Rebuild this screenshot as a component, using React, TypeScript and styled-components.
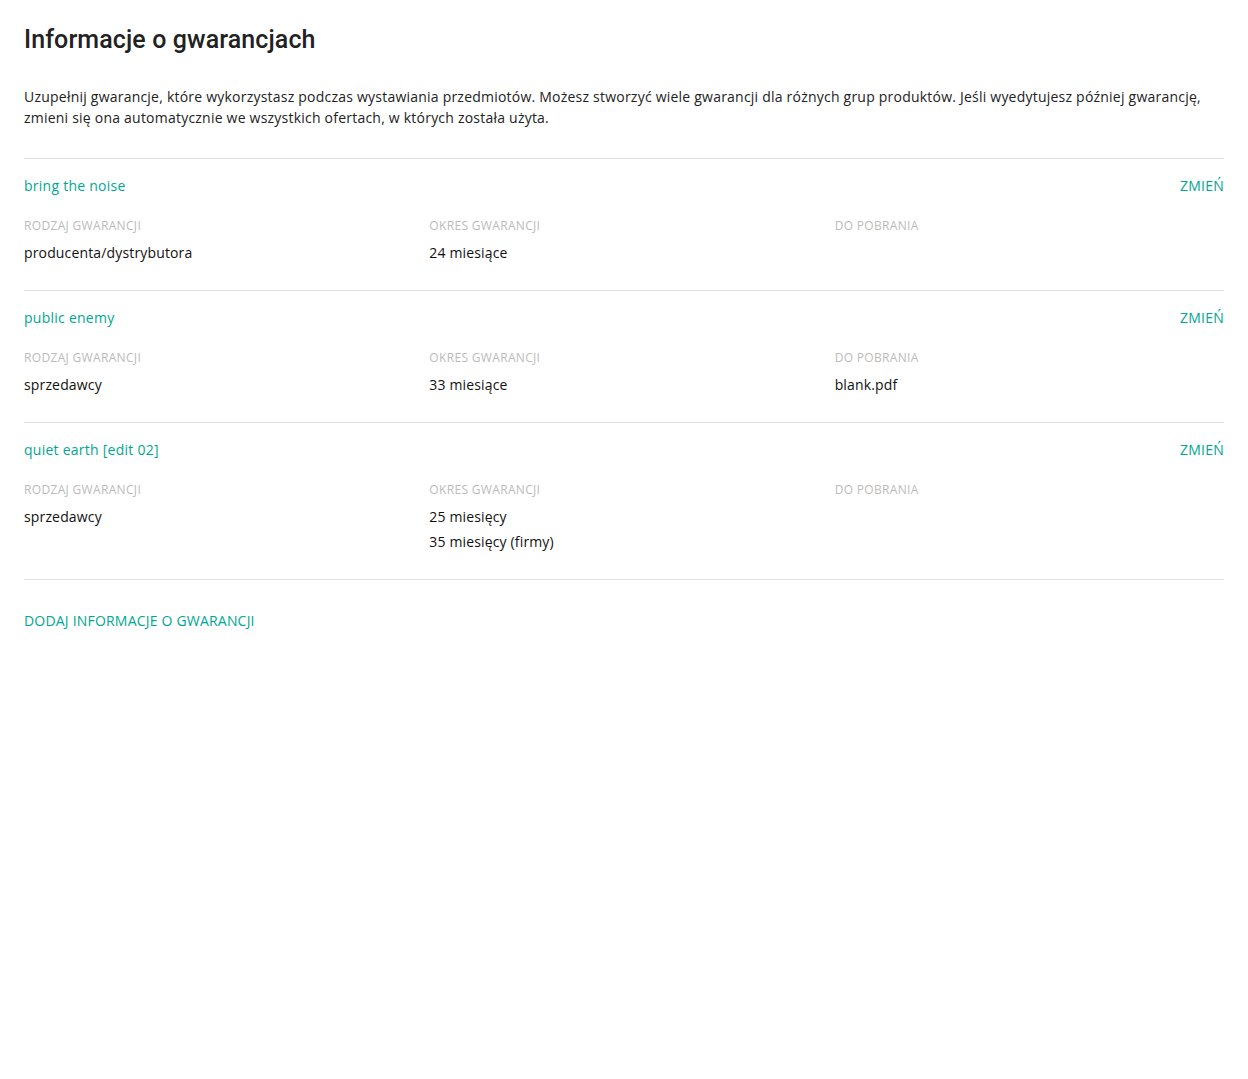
import React from "react";
import styled, { createGlobalStyle } from "styled-components";

const Global = createGlobalStyle`
  html, body { margin: 0; padding: 0; background: #fff; }
  body { font-family: "Open Sans", "Liberation Sans", sans-serif; color: #222; }
`;

const Page = styled.div`
  padding: 24px;
`;

const Heading = styled.h1`
  margin: 0;
  font-family: Roboto, "Liberation Sans", sans-serif;
  font-weight: 500;
  font-size: 25px;
  letter-spacing: 0.1px;
  line-height: 32px;
  color: #222;
`;

const Intro = styled.p`
  margin: 30px 0 30px;
  font-size: 14px;
  letter-spacing: 0.22px;
  line-height: 21px;
  color: #222;
`;

const Section = styled.section`
  border-top: 1px solid #e2e2e2;
  padding: 17px 0 25px;
`;

const TitleRow = styled.div`
  display: flex;
  justify-content: space-between;
  align-items: center;
  font-size: 14px;
  letter-spacing: 0.25px;
  line-height: 20px;
`;

const Link = styled.a<{ $upper?: boolean }>`
  color: #00a790;
  text-decoration: none;
  cursor: pointer;
  text-transform: ${(p) => (p.$upper ? "uppercase" : "none")};
`;

const Grid = styled.div`
  display: grid;
  grid-template-columns: repeat(3, 1fr);
  column-gap: 16px;
  margin-top: 22px;
`;

const Col = styled.div`
  display: flex;
  flex-direction: column;
`;

const Label = styled.div`
  font-size: 12px;
  letter-spacing: 0.33px;
  line-height: 16px;
  color: #bbb;
  text-transform: uppercase;
  margin-bottom: 6px;
`;

const Value = styled.div`
  font-size: 14px;
  letter-spacing: 0.15px;
  line-height: 25px;
  color: #111;
`;

const Footer = styled.div`
  border-top: 1px solid #e2e2e2;
  padding-top: 31px;
  font-size: 14px;
  letter-spacing: 0.2px;
  line-height: 20px;
`;

type Warranty = {
  name: string;
  type: string;
  periods: string[];
  files: string[];
};

const data: Warranty[] = [
  { name: "bring the noise", type: "producenta/dystrybutora", periods: ["24 miesiące"], files: [] },
  { name: "public enemy", type: "sprzedawcy", periods: ["33 miesiące"], files: ["blank.pdf"] },
  { name: "quiet earth [edit 02]", type: "sprzedawcy", periods: ["25 miesięcy", "35 miesięcy (firmy)"], files: [] },
];

export default function App() {
  return (
    <Page>
      <Global />
      <Heading>Informacje o gwarancjach</Heading>
      <Intro>
        Uzupełnij gwarancje, które wykorzystasz podczas wystawiania przedmiotów. Możesz stworzyć wiele gwarancji dla
        różnych grup produktów. Jeśli wyedytujesz później gwarancję, zmieni się ona automatycznie we wszystkich
        ofertach, w których została użyta.
      </Intro>
      {data.map((w) => (
        <Section key={w.name}>
          <TitleRow>
            <Link>{w.name}</Link>
            <Link $upper>Zmień</Link>
          </TitleRow>
          <Grid>
            <Col>
              <Label>Rodzaj gwarancji</Label>
              <Value>{w.type}</Value>
            </Col>
            <Col>
              <Label>Okres gwarancji</Label>
              {w.periods.map((p) => (
                <Value key={p}>{p}</Value>
              ))}
            </Col>
            <Col>
              <Label>Do pobrania</Label>
              {w.files.length ? w.files.map((f) => <Value key={f}>{f}</Value>) : <Value>&nbsp;</Value>}
            </Col>
          </Grid>
        </Section>
      ))}
      <Footer>
        <Link $upper>Dodaj informacje o gwarancji</Link>
      </Footer>
    </Page>
  );
}
